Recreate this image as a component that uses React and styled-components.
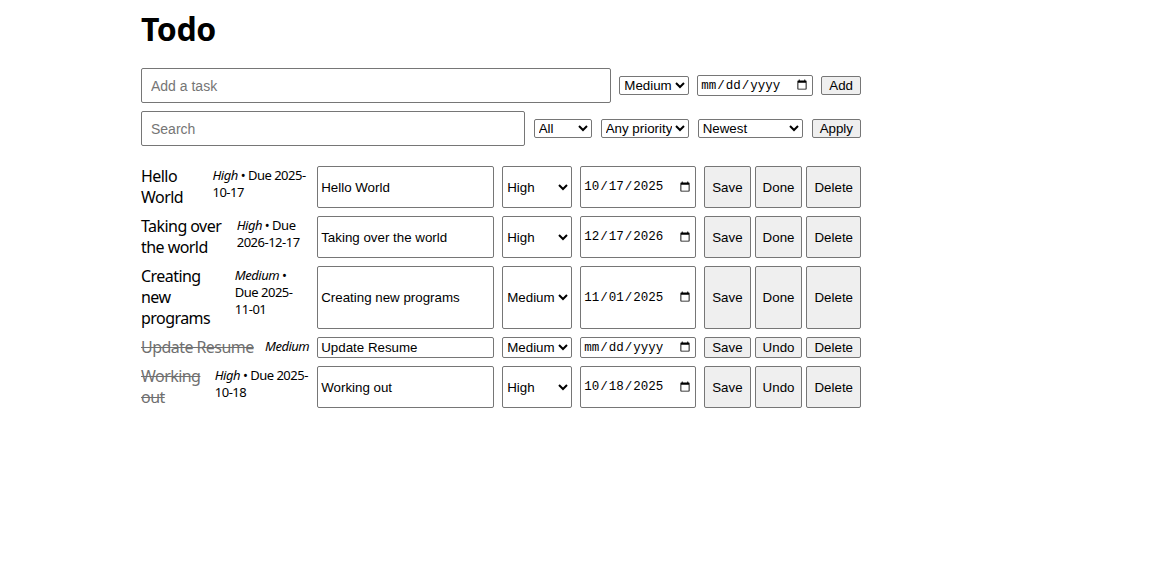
import React from "react";
import styled, { createGlobalStyle } from "styled-components";

const todos = [
  { id: 1, text: "Hello World", priority: "High", due: "2025-10-17", done: false },
  { id: 2, text: "Taking over the world", priority: "High", due: "2026-12-17", done: false },
  { id: 3, text: "Creating new programs", priority: "Medium", due: "2025-11-01", done: false },
  { id: 4, text: "Update Resume", priority: "Medium", due: "", done: true },
  { id: 5, text: "Working out", priority: "High", due: "2025-10-18", done: true },
];

const GlobalStyle = createGlobalStyle`
  body {
    margin: 8px;
    font-family: "Noto Sans", "Open Sans", sans-serif;
    color: #000;
    background: #fff;
  }
`;

const Page = styled.main`
  max-width: 720px;
  margin-left: 133px;
`;

const Heading = styled.h1`
  margin: 0 0 19px;
  font-size: 32px;
  line-height: 41px;
  font-weight: 700;
  letter-spacing: -0.4px;
`;

const Bar = styled.form`
  display: flex;
  align-items: center;
  gap: ${({ $gap }) => $gap || 8}px;
  margin-bottom: 8px;
`;

const BigInput = styled.input`
  flex: 1;
  min-width: 0;
  box-sizing: border-box;
  height: 35px;
  padding: 0 9px;
  font: 14px "Liberation Sans", Arial, sans-serif;
  border: 1px solid #767676;
  border-radius: 2px;
  &::placeholder {
    color: #757575;
  }
`;

const Select = styled.select`
  box-sizing: border-box;
  flex-shrink: 0;
  width: ${({ $w }) => $w || 70}px;
  font: 13.33px "Liberation Sans", Arial, sans-serif;
  color: #000;
  border: 1px solid #767676;
  border-radius: 2px;
  background: #fff;
`;

const DateInput = styled.input.attrs({ type: "date" })`
  box-sizing: border-box;
  flex-shrink: 0;
  width: 116px;
  padding: 1px 2px;
  font: 12.5px "Liberation Mono", "DejaVu Sans Mono", monospace;
  border: 1px solid #767676;
  border-radius: 2px;
`;

const Button = styled.button`
  flex-shrink: 0;
  padding: 1px 7px;
  font: 13.33px "Liberation Sans", Arial, sans-serif;
  color: #000;
  background: #efefef;
  border: 1px solid #767676;
  border-radius: 2px;
`;

const List = styled.ul`
  list-style: none;
  margin: 20px 0 0;
  padding: 0;
  display: flex;
  flex-direction: column;
  gap: 8px;
`;

const Item = styled.li`
  display: flex;
  gap: 8px;
`;

const Title = styled.span`
  flex: 1 1 auto;
  font-size: 16px;
  line-height: 21px;
  letter-spacing: -0.55px;
  color: ${({ $done }) => ($done ? "#707070" : "#000")};
  text-decoration: ${({ $done }) => ($done ? "line-through" : "none")};
`;

const Meta = styled.span`
  font-size: 13px;
  line-height: 17px;
  letter-spacing: -0.5px;
  padding-top: 1px;
`;

const EditInput = styled.input`
  box-sizing: border-box;
  flex-shrink: 0;
  width: 177px;
  padding: 1px 3px;
  font: 13.33px "Liberation Sans", Arial, sans-serif;
  border: 1px solid #767676;
  border-radius: 2px;
`;

const Actions = styled.div`
  display: flex;
  gap: 4px;
  flex-shrink: 0;
`;

const TodoRow = ({ todo }) => (
  <Item>
    <Title $done={todo.done}>{todo.text}</Title>
    <Meta>
      <em>{todo.priority}</em>
      {todo.due && ` • Due ${todo.due}`}
    </Meta>
    <EditInput defaultValue={todo.text} />
    <Select defaultValue={todo.priority}>
      <option>Low</option>
      <option>Medium</option>
      <option>High</option>
    </Select>
    <DateInput defaultValue={todo.due} />
    <Actions>
      <Button>Save</Button>
      <Button>{todo.done ? "Undo" : "Done"}</Button>
      <Button>Delete</Button>
    </Actions>
  </Item>
);

export default function App() {
  return (
    <>
      <GlobalStyle />
      <Page>
        <Heading>Todo</Heading>

        <Bar onSubmit={(e) => e.preventDefault()}>
          <BigInput placeholder="Add a task" />
          <Select defaultValue="Medium">
            <option>Low</option>
            <option>Medium</option>
            <option>High</option>
          </Select>
          <DateInput />
          <Button>Add</Button>
        </Bar>

        <Bar $gap={9} onSubmit={(e) => e.preventDefault()}>
          <BigInput placeholder="Search" />
          <Select $w={58}>
            <option>All</option>
            <option>Active</option>
            <option>Done</option>
          </Select>
          <Select $w={88}>
            <option>Any priority</option>
            <option>High</option>
            <option>Medium</option>
            <option>Low</option>
          </Select>
          <Select $w={105}>
            <option>Newest</option>
            <option>Oldest</option>
            <option>Due date</option>
            <option>Priority</option>
          </Select>
          <Button>Apply</Button>
        </Bar>

        <List>
          {todos.map((t) => (
            <TodoRow key={t.id} todo={t} />
          ))}
        </List>
      </Page>
    </>
  );
}
